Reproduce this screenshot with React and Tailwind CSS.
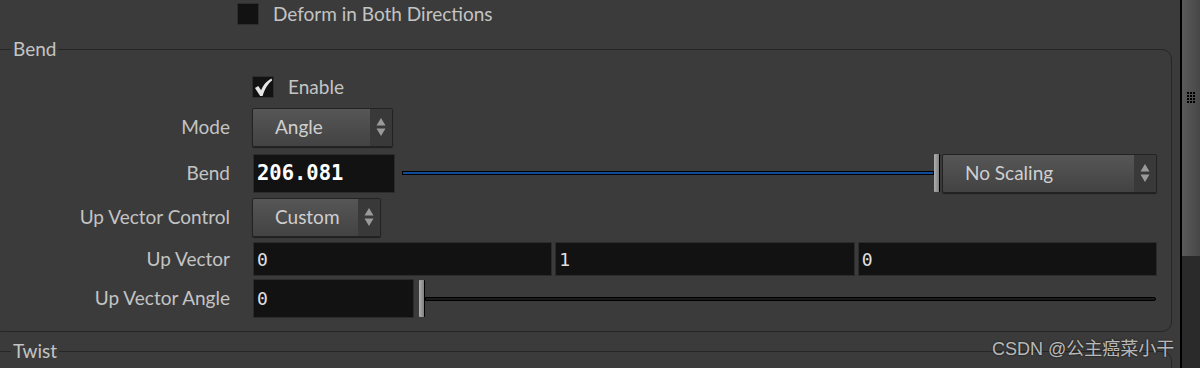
import React from 'react';

const sans = { fontFamily: 'Lato, "Noto Sans", sans-serif' };

const Arrows = () => (
    <svg width="10" height="20" viewBox="0 0 10 20">
        <path d="M5 1 L9.5 8.5 L0.5 8.5 Z" fill="#9a9a9a" />
        <path d="M0.5 11.5 L9.5 11.5 L5 19 Z" fill="#9a9a9a" />
    </svg>
);

const Dropdown = ({ label, width }) => (
    <div
        className="flex h-[39px] items-stretch rounded-[2px] border border-[#232323] bg-gradient-to-b from-[#565656] to-[#434343] shadow-[0_1px_1px_rgba(0,0,0,0.5)]"
        style={{ width }}
    >
        <div className="flex flex-1 items-center pl-[22px] text-[19px] text-[#cfcfcf]">{label}</div>
        <div className="flex w-[22px] items-center justify-center bg-[#393939]">
            <Arrows />
        </div>
    </div>
);

const Field = ({ value, className = '', bold = false }) => (
    <div
        className={`flex items-center border border-[#2c2c2c] bg-[#121212] pl-[3px] ${className}`}
        style={{ fontFamily: '"DejaVu Sans Mono", "Liberation Mono", monospace' }}
    >
        <span className={bold ? 'text-[20.5px] font-bold text-white' : 'text-[18px] text-[#e0e0e0]'}>{value}</span>
    </div>
);

const Handle = ({ h }) => (
    <div
        className="w-[6px] shrink-0 rounded-[1px] border-r border-black bg-gradient-to-r from-[#b0b0b0] to-[#808080]"
        style={{ height: h }}
    />
);

const Check = ({ checked }) => (
    <div className="flex h-[22px] w-[22px] items-center justify-center border border-[#2e2e2e] bg-[#121212]">
        {checked && (
            <svg width="19" height="19" viewBox="0 0 20 20">
                <path d="M1 10.5 L4.5 8.5 L7.5 13 C10 7 13 3.5 18.5 0.5 L19 2.5 C14.5 6 11.5 11 9 19 L6.5 19 Z" fill="#e6e6e6" />
            </svg>
        )}
    </div>
);

const Row = ({ label, h, mt, children }) => (
    <div className="flex items-center" style={{ height: h, marginTop: mt }}>
        <div className="w-[237px] shrink-0 text-right text-[19px] text-[#c4c4c4]">{label}</div>
        <div className="ml-[22px] flex flex-1 items-center">{children}</div>
    </div>
);

export default function App() {
    return (
        <div className="relative flex h-[368px] w-[1200px] overflow-hidden bg-[#3b3b3b]" style={sans}>
            <div className="flex-1">
                <div className="flex h-[28px] items-center pl-[237px]">
                    <Check />
                    <span className="ml-[14px] text-[19px] text-[#c4c4c4]">Deform in Both Directions</span>
                </div>

                <fieldset className="ml-[-8px] mr-[8px] mt-[10px] rounded-[10px] border border-[#262626] pb-[13px]">
                    <legend className="ml-[18px] px-[2px] text-[19px] leading-[22px] text-[#c4c4c4]">Bend</legend>
                    <div className="mt-[16px] flex h-[22px] items-center pl-[259px]">
                        <Check checked />
                        <span className="ml-[14px] text-[19px] text-[#c4c4c4]">Enable</span>
                    </div>
                    <Row label="Mode" h={40} mt={9}>
                        <Dropdown label="Angle" width={141} />
                    </Row>
                    <Row label="Bend" h={40} mt={6}>
                        <Field value="206.081" bold className="ml-[1px] h-[39px] w-[142px]" />
                        <div className="ml-[7px] h-[4px] flex-1 border border-black bg-[#0f4b98]" />
                        <Handle h={38} />
                        <div className="ml-[2px] mr-[14px]">
                            <Dropdown label="No Scaling" width={215} />
                        </div>
                    </Row>
                    <Row label="Up Vector Control" h={40} mt={4}>
                        <Dropdown label="Custom" width={129} />
                    </Row>
                    <Row label="Up Vector" h={34} mt={5}>
                        <div className="ml-[1px] mr-[14px] flex flex-1 gap-[3px]">
                            <Field value="0" className="h-[34px] flex-1" />
                            <Field value="1" className="h-[34px] flex-1" />
                            <Field value="0" className="h-[34px] flex-1" />
                        </div>
                    </Row>
                    <Row label="Up Vector Angle" h={39} mt={3}>
                        <Field value="0" className="ml-[1px] h-[39px] w-[161px]" />
                        <div className="ml-[5px]">
                            <Handle h={37} />
                        </div>
                        <div className="mr-[15px] h-[4px] flex-1 rounded-r-[2px] border border-black bg-[#1a1a1a]" />
                    </Row>
                </fieldset>

                <fieldset className="ml-[-8px] mr-[8px] mt-[8px] h-[60px] rounded-[10px] border border-[#262626]">
                    <legend className="ml-[18px] px-[2px] text-[19px] leading-[22px] text-[#c4c4c4]">Twist</legend>
                </fieldset>
            </div>

            <div className="flex w-[20px] shrink-0 flex-col border-l-2 border-black">
                <div className="flex h-[256px] items-start justify-center bg-gradient-to-r from-[#5a5a5a] to-[#474747] pt-[92px]">
                    <div className="grid grid-cols-3 gap-[1px]">
                        {Array.from({ length: 12 }).map((_, i) => (
                            <div key={i} className="h-[2px] w-[2px] bg-black" />
                        ))}
                    </div>
                </div>
                <div className="flex-1 bg-[#2a2a2a]" />
            </div>

            <div
                className="absolute left-[992px] top-[336px] text-[18px] text-white/70 [text-shadow:0_0_2px_rgba(0,0,0,0.8)]"
                style={{ fontFamily: '"Liberation Sans", "Noto Sans CJK SC", sans-serif' }}
            >
                CSDN @公主癌菜小干
            </div>
        </div>
    );
}
